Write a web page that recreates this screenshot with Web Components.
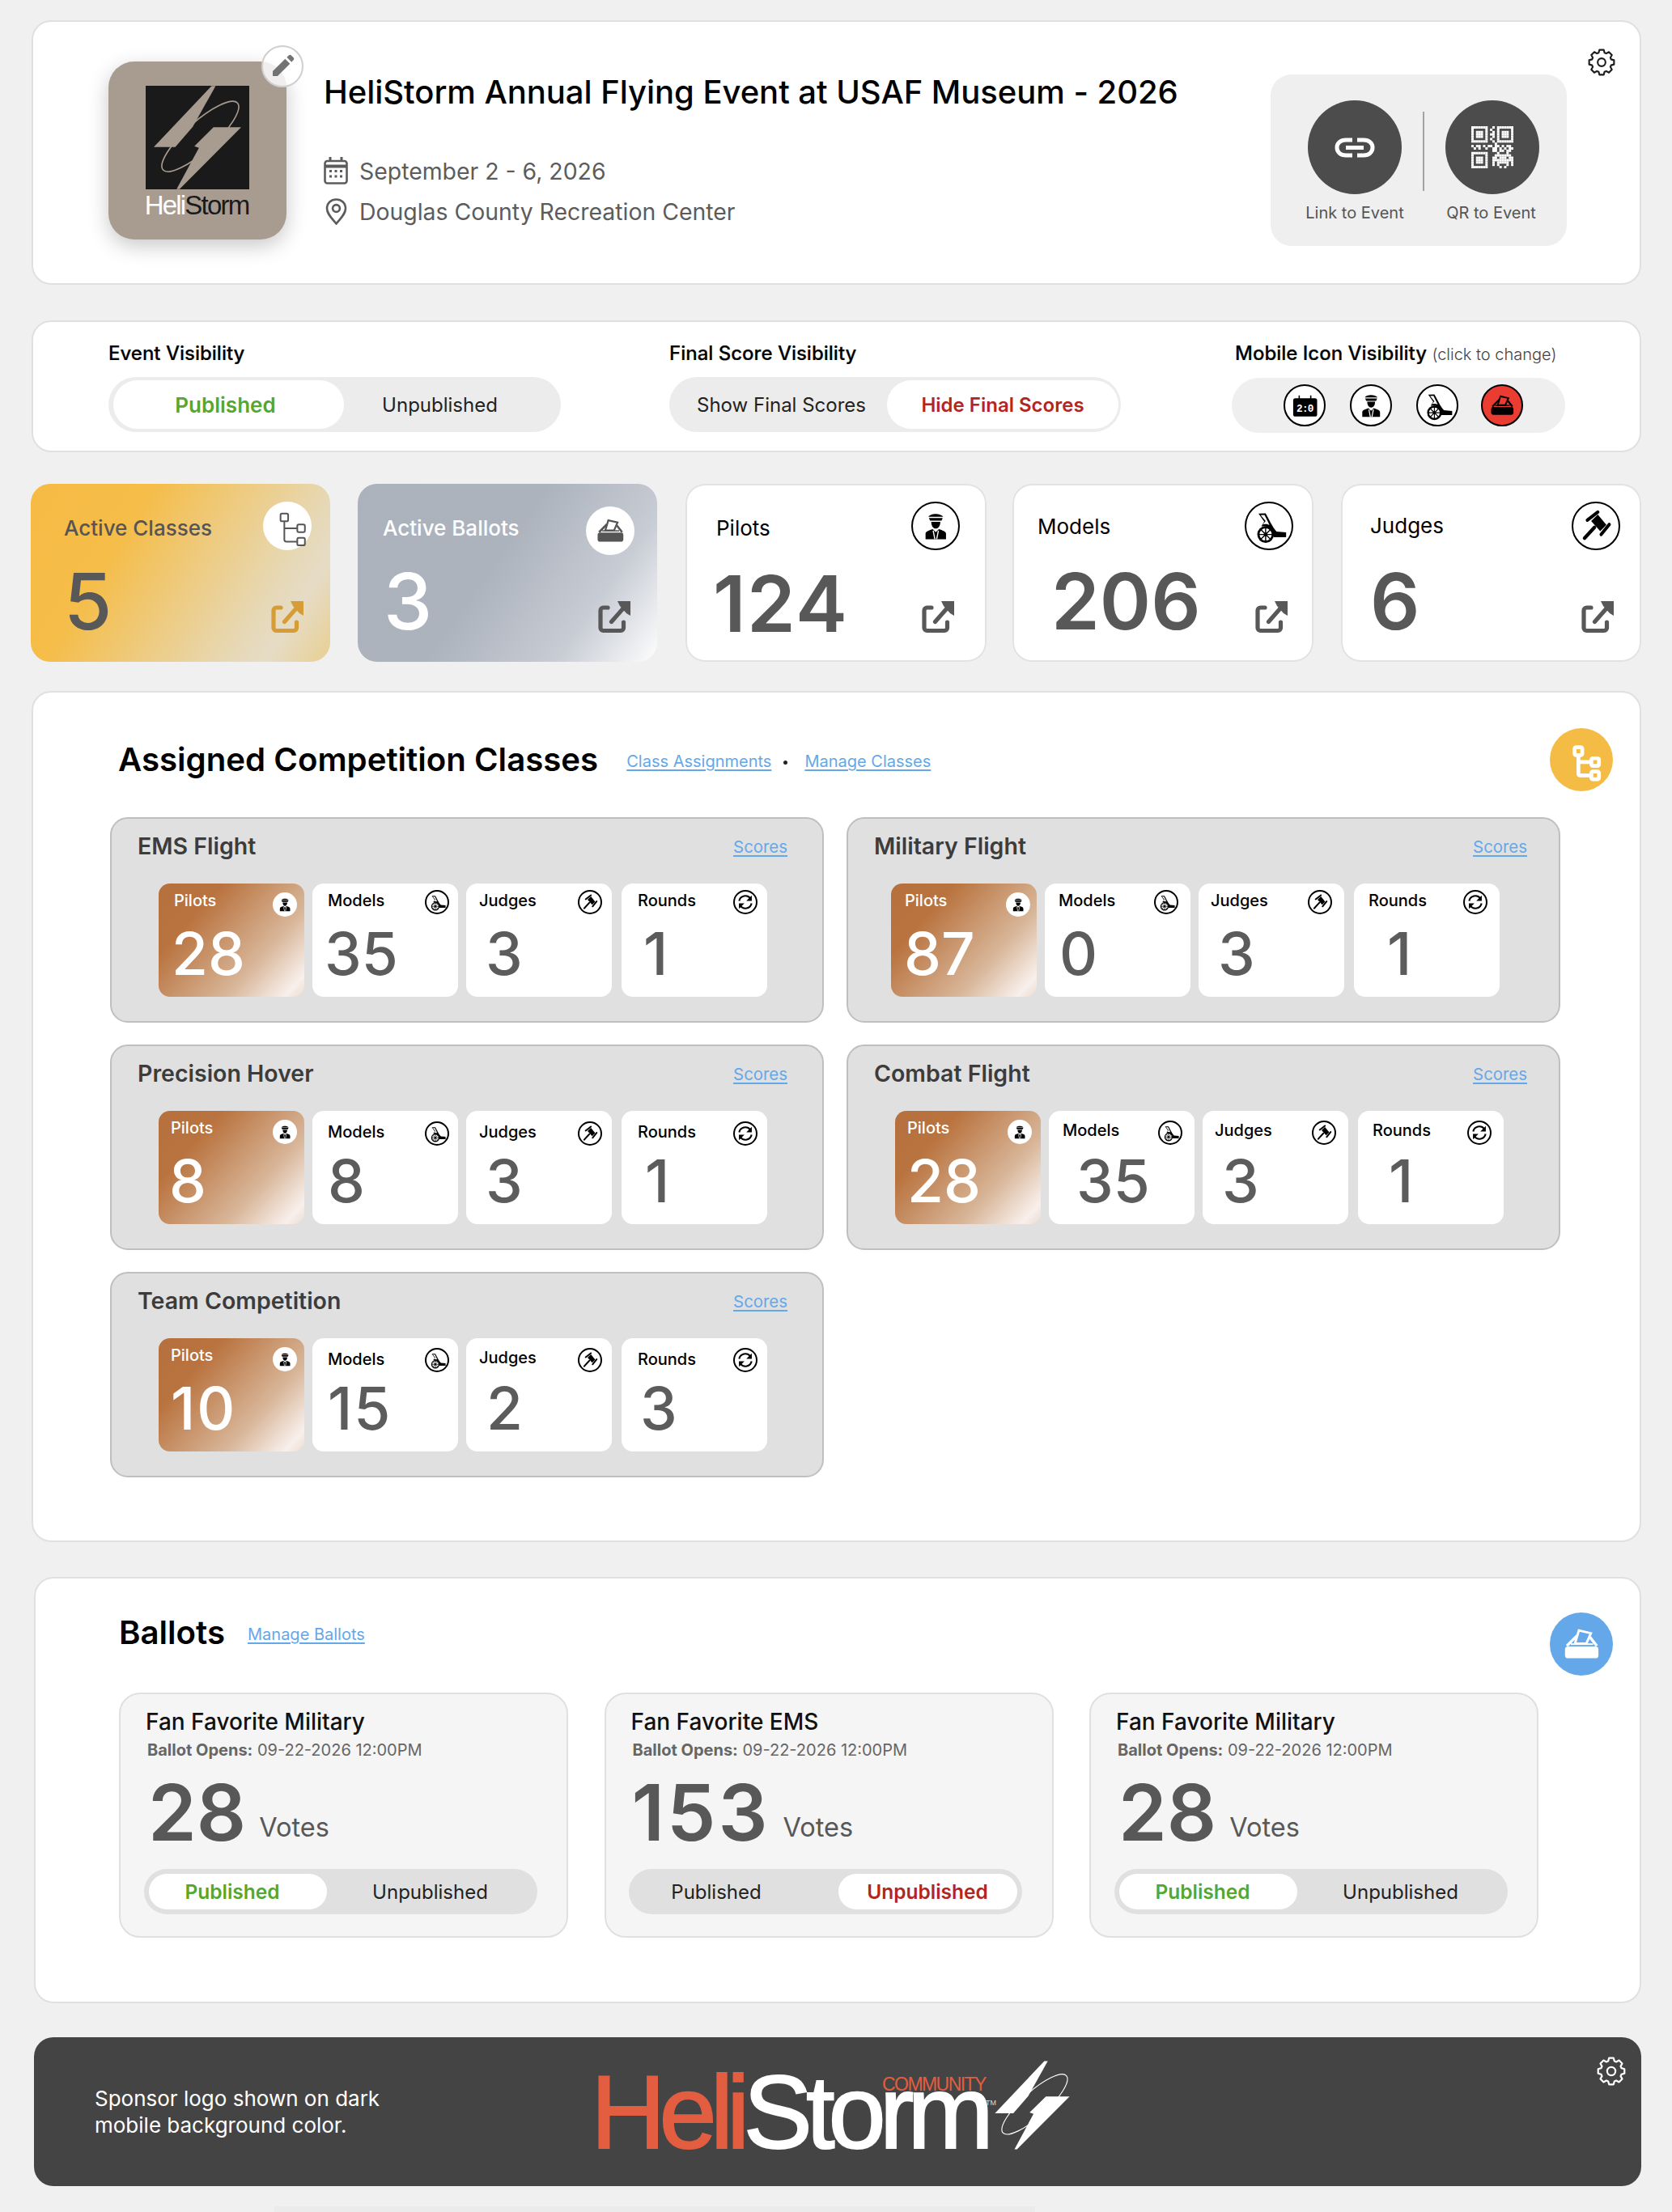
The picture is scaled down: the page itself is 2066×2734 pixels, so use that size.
<!DOCTYPE html>
<html lang="en">
<head>
<meta charset="utf-8">
<title>HeliStorm event</title>
<style>
  html, body { margin: 0; background: #f0f0f0; font-family: Inter, "Liberation Sans", sans-serif; }
  body { padding: 25px 38px 0 39px; width: 2066px; height: 2734px; box-sizing: border-box; overflow: hidden; }
  .stats { display: flex; margin: 39px 0 36px -1px; }
  .foot { width: 940px; height: 8px; margin: 25px 0 0 300px; background: #ebebeb; }
</style>
</head>
<body>
  <event-header></event-header>
  <visibility-card></visibility-card>
  <div class="stats">
    <stat-card tone="gold" label="Active Classes" value="5" icon="tree" style="--w:370px;--lx:41px;--nx:41px;--ex:33px;--bx:23px"></stat-card>
    <stat-card tone="steel" label="Active Ballots" value="3" icon="ballot" style="--w:370px;--gap:34px;--lx:31px;--nx:32px;--ex:33px;--bx:28px"></stat-card>
    <stat-card label="Pilots" value="124" icon="pilot" style="--w:372px;--gap:35px;--lx:38px;--nx:34px;--ex:40px;--bx:33px;--nls:1.5px;--ny:3px"></stat-card>
    <stat-card label="Models" value="206" icon="model" style="--w:372px;--gap:32px;--lx:31px;--nx:48px;--ex:32px;--bx:25px;--ly:-2px"></stat-card>
    <stat-card label="Judges" value="6" icon="gavel" style="--w:371px;--gap:34px;--lx:36px;--nx:36px;--ex:34px;--bx:26px;--ly:-3px"></stat-card>
  </div>

  <section-card heading="Assigned Competition Classes" icon="tree" tint="#f5bc45" class="classes">
    <a slot="links">Class Assignments</a><i slot="links"></i><a slot="links">Manage Classes</a>
    <class-card heading="EMS Flight" style="--tx:58px;--sr:43px;--ly:-1px;--bi:12px">
      <mini-stat label="Pilots" value="28" icon="pilot" hot style="--nx:16px;--lx:19px"></mini-stat>
      <mini-stat label="Models" value="35" icon="model" style="--nx:15px;--lx:19px;--bi:11px"></mini-stat>
      <mini-stat label="Judges" value="3" icon="gavel" style="--nx:24px;--lx:16px"></mini-stat>
      <mini-stat label="Rounds" value="1" icon="sync" last style="--nx:27px;--lx:20px"></mini-stat>
    </class-card>
    <class-card heading="Military Flight" style="--tx:53px;--sr:39px;--ly:-1px;--bi:15px">
      <mini-stat label="Pilots" value="87" icon="pilot" hot style="--nx:16px;--lx:17px;--hb:8px"></mini-stat>
      <mini-stat label="Models" value="0" icon="model" style="--nx:18px;--lx:17px"></mini-stat>
      <mini-stat label="Judges" value="3" icon="gavel" style="--nx:24px;--lx:15px"></mini-stat>
      <mini-stat label="Rounds" value="1" icon="sync" last style="--nx:41px;--lx:18px"></mini-stat>
    </class-card>
    <class-card heading="Precision Hover" style="--tx:58px;--sr:43px;--ly:4px;--by:5px;--bi:12px">
      <mini-stat label="Pilots" value="8" icon="pilot" hot style="--nx:13px;--lx:15px;--ly:-1px"></mini-stat>
      <mini-stat label="Models" value="8" icon="model" style="--nx:19px;--lx:19px;--bi:11px"></mini-stat>
      <mini-stat label="Judges" value="3" icon="gavel" style="--nx:24px;--lx:16px"></mini-stat>
      <mini-stat label="Rounds" value="1" icon="sync" last style="--nx:29px;--lx:20px"></mini-stat>
    </class-card>
    <class-card heading="Combat Flight" style="--tx:58px;--sr:39px;--ly:2px;--by:4px;--bi:15px">
      <mini-stat label="Pilots" value="28" icon="pilot" hot style="--nx:15px;--lx:15px;--ly:-1px;--hb:11px"></mini-stat>
      <mini-stat label="Models" value="35" icon="model" style="--nx:34px;--lx:17px"></mini-stat>
      <mini-stat label="Judges" value="3" icon="gavel" style="--nx:24px;--lx:15px"></mini-stat>
      <mini-stat label="Rounds" value="1" icon="sync" last style="--nx:38px;--lx:18px"></mini-stat>
    </class-card>
    <class-card heading="Team Competition" style="--tx:58px;--sr:43px;--ly:4px;--by:4px;--bi:12px">
      <mini-stat label="Pilots" value="10" icon="pilot" hot style="--nx:15px;--lx:15px;--ly:-1px;--nls:2px"></mini-stat>
      <mini-stat label="Models" value="15" icon="model" style="--nx:19px;--lx:19px;--bi:11px;--nls:2px"></mini-stat>
      <mini-stat label="Judges" value="2" icon="gavel" style="--nx:25px;--lx:16px;--ly:2px"></mini-stat>
      <mini-stat label="Rounds" value="3" icon="sync" last style="--nx:23px;--lx:20px"></mini-stat>
    </class-card>
  </section-card>

  <section-card heading="Ballots" icon="ballot" tint="#64a8ea" class="ballots">
    <a slot="links">Manage Ballots</a>
    <ballot-card heading="Fan Favorite Military" value="28" active="a"></ballot-card>
    <ballot-card heading="Fan Favorite EMS" value="153" active="b"></ballot-card>
    <ballot-card heading="Fan Favorite Military" value="28" active="a"></ballot-card>
  </section-card>

  <sponsor-card></sponsor-card>
  <div class="foot"></div>

<script>
  // gear path, 8 teeth, drawn in a 24 box
  function gearPath() {
    let d = '';
    for (let i = 0; i < 8; i++) {
      const a = i * Math.PI / 4;
      const pts = [[8.7, -0.30], [11, -0.17], [11, 0.17], [8.7, 0.30]];
      pts.forEach(p => {
        const x = 12 + p[0] * Math.sin(a + p[1]);
        const y = 12 - p[0] * Math.cos(a + p[1]);
        d += (d ? 'L' : 'M') + x.toFixed(2) + ' ' + y.toFixed(2);
      });
    }
    return d + 'Z';
  }

  // little qr with the invader in the corner
  function qrRects() {
    const rows = [
      '111111100101111111',
      '100000101001000001',
      '101110100101011101',
      '101110101101011101',
      '101110100101011101',
      '100000101001000001',
      '111111100101111111',
      '000000000010000000',
      '101101011011010110',
      '010100100110101011',
      '000000000110110110',
      '111111100001000100',
      '100000100011111110',
      '101110100110111011',
      '101110100111111111',
      '101110100101111101',
      '100000100101000101',
      '111111100000101000'
    ];
    let out = '';
    rows.forEach((r, y) => { [...r].forEach((c, x) => { if (c === '1') out += `<rect x="${x}" y="${y}" width="1.03" height="1.03"/>`; }); });
    return out;
  }

  const BOLT = `<path fill="currentColor" d="M425 138H440L355 290L290 365H210Z"/>
    <path fill="currentColor" d="M432 292H535L306 522H295L378 368L361 362Z"/>
    <ellipse cx="383" cy="326" rx="186" ry="54" transform="rotate(-42 383 326)" fill="none" stroke="currentColor" stroke-width="var(--ring,6)"/>`;

  const ICONS = {
    // drawn on the 51 box of the round badges
    pilot: `<path d="M18 16C20 12 31 12 33.5 16Z"/><path d="M18.5 17.2H33L31.8 20H19.8Z"/><path d="M21 21.2H30.5C30.5 25.5 28.5 28.3 25.7 28.3S21 25.5 21 21.2Z"/><path d="M15 39.5V33.8C15 31.3 19 30.2 22.5 29L25.7 32L29 29C32.5 30.2 36.5 31.3 36.5 33.8V39.5Z"/><path d="M23 30.5L24.8 39.5M28.5 30.5L26.7 39.5" stroke="var(--hole,#fff)" stroke-width="1.2" fill="none"/>`,
    model: `<path d="M14.5 12.5L22 12.3C25.5 18 28.5 26 33.5 31.5L43.5 32.3V37.3H30.5L29.5 31C27 28 25 26.5 22 26L17.5 26L20.5 21Z"/><path d="M16.8 14.2L20.8 14L26 24.5C24.5 24 23.5 23.6 21.5 23.6L19 24L22 20.5Z" fill="var(--hole,#fff)"/><circle cx="22" cy="34.5" r="7.6" fill="var(--hole,#fff)" stroke="currentColor" stroke-width="2.4"/><path d="M22 27V42M14.5 34.5H29.5M16.7 29.2L27.3 39.8M27.3 29.2L16.7 39.8" stroke="currentColor" stroke-width="1.2"/><circle cx="22" cy="34.5" r="2"/>`,
    gavel: `<path d="M20.5 20.5L27.5 13.5L36.5 24.5L30 31Z"/><path d="M16.5 19.5L27.5 11M31 34.5L39.5 24" fill="none" stroke="currentColor" stroke-width="3.4" stroke-linecap="round"/><path d="M24 27L13.5 38.5" fill="none" stroke="currentColor" stroke-width="3.6" stroke-linecap="round"/>`,
    sync: `<path d="M12.5 23A13.3 13.3 0 0 1 36 17.5" fill="none" stroke="currentColor" stroke-width="3.6"/><path d="M39 11.5V23H27.5Z"/><path d="M38.5 28A13.3 13.3 0 0 1 15 33.5" fill="none" stroke="currentColor" stroke-width="3.6"/><path d="M12 39.5V28H23.5Z"/>`,
    score: `<path d="M19 13.5V18M33 13.5V18" stroke="currentColor" stroke-width="1.5"/><rect x="11.7" y="17" width="29" height="22" rx="2.5"/><text x="26.2" y="33" text-anchor="middle" font-family="Liberation Mono,monospace" font-weight="700" font-size="12.5" fill="#fff" textLength="21">2:0</text>`,
    ballot: `<rect x="12.3" y="27.5" width="27" height="9.5" rx="2.4"/><path d="M13.8 27L22 18.7M38 27L32.5 20" fill="none" stroke="currentColor" stroke-width="2.2"/><path d="M23.5 14.5L33.2 16.8L29.5 25.2H20.3Z" fill="none" stroke="currentColor" stroke-width="1.9"/><path d="M17 25.6H35" stroke="currentColor" stroke-width="1.3"/>`,
    tree: `<g fill="none" stroke="currentColor" stroke-width="var(--sw,1.7)"><rect x="18.4" y="12.5" width="8" height="8.2" rx="1.6"/><rect x="36" y="24" width="8" height="8" rx="1.6"/><rect x="36" y="38" width="8" height="8" rx="1.6"/><path d="M22.4 20.7V40C22.4 41.5 23.4 42 24.5 42H36M22.4 28H36"/></g>`,
    // other boxes
    ext: `<g fill="none" stroke="currentColor" stroke-width="5.2" stroke-linecap="round"><path d="M12 8H6.5C4.5 8 3 9.5 3 11.5V33C3 35 4.5 36.5 6.5 36.5H28C30 36.5 31.5 35 31.5 33V26"/><path d="M16.5 25.5L31 9"/></g><path fill="currentColor" d="M24 0H40V18L35 15L27 6Z"/>`,
    pencil: `<path d="M3 21V16.5L14.5 5L19 9.5L7.5 21Z"/><path d="M16 3.5L18 1.7C18.6 1.1 19.4 1.1 20 1.7L22.3 4C22.9 4.6 22.9 5.4 22.3 6L20.5 8Z"/>`,
    gear: `<path d="${gearPath()}" fill="none" stroke="currentColor" stroke-width="1.5" stroke-linejoin="round"/><circle cx="12" cy="12" r="3.4" fill="none" stroke="currentColor" stroke-width="1.5"/>`,
    link: `<g fill="none" stroke="#fff" stroke-width="5"><path d="M22 3H14C7.5 3 3 7 3 12.5S7.5 22 14 22H22"/><path d="M28 3H36C42.5 3 47 7 47 12.5S42.5 22 36 22H28"/><path d="M14 12.5H36"/></g>`,
    qr: `<g fill="#fff">${qrRects()}</g>`,
    calendar: `<g fill="none" stroke="currentColor" stroke-width="2.6"><rect x="1.5" y="5" width="27" height="27.5" rx="3"/><path d="M2 11.5H28" stroke-width="4"/><path d="M8 0V6M22 0V6" stroke-width="3"/></g><g fill="currentColor"><rect x="7" y="16" width="3" height="3"/><rect x="13.5" y="16" width="3" height="3"/><rect x="20" y="16" width="3" height="3"/><rect x="7" y="22.5" width="3" height="3"/><rect x="13.5" y="22.5" width="3" height="3"/><rect x="20" y="22.5" width="3" height="3"/></g>`,
    pin: `<path d="M13.5 31.5C8 24.5 2 19.5 2 12.5C2 6 7 1.5 13.5 1.5S25 6 25 12.5C25 19.5 19 24.5 13.5 31.5Z" fill="none" stroke="currentColor" stroke-width="2.6"/><circle cx="13.5" cy="12.5" r="4.4" fill="none" stroke="currentColor" stroke-width="2.6"/>`
  };
  const BOXES = { ext: '0 0 40 40', pencil: '0 0 24 24', gear: '0 0 24 24', link: '0 0 50 25', qr: '0 0 18 18', calendar: '0 0 30 34', pin: '0 0 27 33' };

  class HsIcon extends HTMLElement {
    connectedCallback() {
      const n = this.getAttribute('name');
      const w = this.getAttribute('w') || 24, h = this.getAttribute('h') || w;
      this.attachShadow({ mode: 'open' }).innerHTML = `
        <style>:host{display:inline-flex;flex:none;line-height:0} svg{display:block}</style>
        <svg width="${w}" height="${h}" viewBox="${BOXES[n] || '0 0 51 51'}" fill="currentColor">${ICONS[n]}</svg>`;
    }
  }
  customElements.define('hs-icon', HsIcon);

  // round badge: outline by default, variants through attributes
  class HsBadge extends HTMLElement {
    connectedCallback() {
      const s = this.getAttribute('size') || 60;
      this.attachShadow({ mode: 'open' }).innerHTML = `
        <style>
          :host{display:inline-flex;flex:none;width:${s}px;height:${s}px;border-radius:50%;box-sizing:border-box;border:2px solid #000;background:#fff;color:#000;align-items:center;justify-content:center}
          :host([plain]){border:0}
          :host([red]){background:#ea3c30;--hole:#ea3c30}
        </style>
        <hs-icon name="${this.getAttribute('icon')}" w="${s}"></hs-icon>`;
    }
  }
  customElements.define('hs-badge', HsBadge);

  class SegToggle extends HTMLElement {
    constructor() {
      super();
      this.attachShadow({ mode: 'open' }).innerHTML = `
        <style>
          :host{display:flex;box-sizing:border-box;height:var(--h,68px);width:var(--w,559px);padding:var(--py,4px) var(--pr,6px) var(--py,4px) var(--pl,6px);border-radius:40px;background:var(--bg,#ececec);font-size:var(--fs,24px);color:#222;align-items:stretch}
          span{display:flex;align-items:center;justify-content:center;white-space:nowrap}
          .on{width:var(--tw,285px);flex:none;box-sizing:border-box;padding-right:var(--opr,0);background:#fff;border-radius:30px;font-weight:600;color:var(--on,#53a82f);font-size:var(--fs-on,var(--fs,24px))}
          .off{flex:1;padding:0 var(--ipr,0) 0 var(--ipl,0)}
        </style>
        <span id="a"><slot name="a"></slot></span><span id="b"><slot name="b"></slot></span>`;
    }
    connectedCallback() {
      const act = this.getAttribute('active') || 'a';
      this.shadowRoot.getElementById('a').className = act === 'a' ? 'on' : 'off';
      this.shadowRoot.getElementById('b').className = act === 'b' ? 'on' : 'off';
    }
  }
  customElements.define('seg-toggle', SegToggle);

  class EventHeader extends HTMLElement {
    constructor() {
      super();
      this.attachShadow({ mode: 'open' }).innerHTML = `
        <style>
          :host{display:flex;box-sizing:border-box;height:327px;background:#fff;border:2px solid #e0e0e0;border-radius:24px;padding:49px 30px 0 93px}
          .avatar{position:relative;flex:none;width:220px;height:220px;border-radius:32px;background:#a89c90;box-shadow:0 8px 26px rgba(0,0,0,.22);display:flex;flex-direction:column;align-items:center}
          .sq{width:128px;height:128px;margin-top:30px;background:#1a1a1a;color:#a89c90;--ring:5px}
          .sq svg{display:block}
          .mark{font:400 33px/36px "Liberation Sans",sans-serif;letter-spacing:-1.8px;color:#1a1a1a;margin-top:2px;padding-right:2px}
          .mark b{font-weight:400;color:#fff}
          .edit{position:absolute;left:189px;top:-20px;width:52px;height:52px;box-sizing:border-box;border-radius:50%;border:2px solid #cfcfcf;background:rgba(255,255,255,.84);color:#737373;display:flex;align-items:center;justify-content:center}
          .info{flex:1;margin:14px 0 0 46px}
          h1{margin:0;font-size:40px;line-height:48px;font-weight:500;color:#000;white-space:nowrap;letter-spacing:-.04px}
          .row{display:flex;align-items:center;height:34px;font-size:28.4px;color:#5c5c5c;white-space:nowrap}
          .row hs-icon{width:30px;margin-right:14px;justify-content:center}
          .row.d{margin-top:56px}.row.l{margin-top:16px}
          .panel{flex:none;width:366px;height:212px;margin-top:16px;background:#efefef;border-radius:26px;display:grid;grid-template-columns:116px 2px 116px;column-gap:26px;padding:32px 0 0 46px;box-sizing:border-box}
          .btn{display:flex;flex-direction:column;align-items:center}
          .btn.q{padding-right:3px}
          .circ{width:116px;height:116px;border-radius:50%;background:#4c4c4c;display:flex;align-items:center;justify-content:center;flex:none}
          .q .circ{margin-right:-3px}
          .lbl{font-size:20px;line-height:24px;margin-top:11px;color:#555;white-space:nowrap}
          .sep{width:2px;height:98px;margin-top:14px;background:#a3a3a3}
          .gear{flex:none;margin:-16px 0 0 26px;color:#1c1c1c;align-self:flex-start}
        </style>
        <div class="avatar">
          <div class="sq"><svg width="128" height="128" viewBox="180 138 385 384">${BOLT}</svg></div>
          <div class="mark"><b>Heli</b>Storm</div>
          <div class="edit"><hs-icon name="pencil" w="32"></hs-icon></div>
        </div>
        <div class="info">
          <h1>HeliStorm Annual Flying Event at USAF Museum - 2026</h1>
          <div class="row d"><hs-icon name="calendar" w="30" h="34"></hs-icon>September 2 - 6, 2026</div>
          <div class="row l"><hs-icon name="pin" w="27" h="33"></hs-icon>Douglas County Recreation Center</div>
        </div>
        <div class="panel">
          <div class="btn"><div class="circ"><hs-icon name="link" w="50" h="25"></hs-icon></div><div class="lbl">Link to Event</div></div>
          <div class="sep"></div>
          <div class="btn q"><div class="circ"><hs-icon name="qr" w="52" h="52"></hs-icon></div><div class="lbl">QR to Event</div></div>
        </div>
        <hs-icon class="gear" name="gear" w="34"></hs-icon>`;
    }
  }
  customElements.define('event-header', EventHeader);

  class VisibilityCard extends HTMLElement {
    constructor() {
      super();
      this.attachShadow({ mode: 'open' }).innerHTML = `
        <style>
          :host{display:flex;box-sizing:border-box;height:163px;margin-top:44px;background:#fff;border:2px solid #e0e0e0;border-radius:24px;padding:24px 0 0 93px;column-gap:134px}
          .lb{font-size:24px;line-height:30px;font-weight:500;color:#000;margin-bottom:14px;white-space:nowrap;-webkit-text-stroke:.2px #000}
          .lb small{font-size:20px;font-weight:300;color:#444;-webkit-text-stroke:0}
          .m .lb{margin-left:4px}
          .icons{display:flex;width:412px;height:68px;border-radius:40px;background:#efefef;align-items:center;padding-left:64px;box-sizing:border-box}
          .icons hs-badge{margin-right:30px}
          .icons hs-badge:nth-child(3){margin-right:28px}
        </style>
        <div>
          <div class="lb">Event Visibility</div>
          <seg-toggle active="a" style="--ipr:25px;--fs-on:26px;--opr:8px"><span slot="a">Published</span><span slot="b">Unpublished</span></seg-toggle>
        </div>
        <div>
          <div class="lb">Final Score Visibility</div>
          <seg-toggle active="b" style="--w:558px;--tw:286px;--pr:3px;--pl:0px;--ipl:8px;--on:#b3261e"><span slot="a">Show Final Scores</span><span slot="b">Hide Final Scores</span></seg-toggle>
        </div>
        <div class="m" style="margin-left:3px">
          <div class="lb">Mobile Icon Visibility <small>(click to change)</small></div>
          <div class="icons">
            <hs-badge icon="score" size="52"></hs-badge>
            <hs-badge icon="pilot" size="52"></hs-badge>
            <hs-badge icon="model" size="52"></hs-badge>
            <hs-badge icon="ballot" size="52" red></hs-badge>
          </div>
        </div>`;
    }
  }
  customElements.define('visibility-card', VisibilityCard);

  class StatCard extends HTMLElement {
    connectedCallback() {
      const a = n => this.getAttribute(n);
      const plain = a('tone') ? 'plain' : '';
      this.attachShadow({ mode: 'open' }).innerHTML = `
        <style>
          :host{display:block;flex:none;box-sizing:border-box;width:var(--w);margin-left:var(--gap,0);height:220px;border-radius:24px;background:#fff;box-shadow:inset 0 0 0 2px #e2e2e2;color:#585858}
          :host([tone=gold]){background:linear-gradient(122deg,#f5bb44 0%,#f5bd49 30%,#e6d9b8 76%,#e6dcc6 84%,#e8cf92 100%);box-shadow:none}
          :host([tone=steel]){background:linear-gradient(125deg,#abb2bc 0%,#acb3bd 45%,#c8ccd4 76%,#f2f3f5 95%,#fff 100%);box-shadow:none;color:#fff}
          .top{display:flex;justify-content:space-between;height:82px;padding:22px var(--bx) 0 var(--lx);box-sizing:border-box}
          .lab{font-size:26px;line-height:66px;height:66px;color:#000;white-space:nowrap;margin-top:var(--ly,0)}
          :host([tone]) .lab{font-weight:500;color:#555}
          :host([tone=steel]) .lab{color:#fff}
          :host([tone=steel]) hs-badge{margin-top:6px}
          :host([tone=gold]) hs-badge,:host([tone=steel]) hs-badge{color:#555}
          .bot{display:flex;justify-content:space-between;padding:15px var(--ex) 0 var(--nx)}
          .num{font-size:96px;line-height:96px;font-weight:600;letter-spacing:var(--nls,0);margin-top:var(--ny,0)}
          :host([tone]) .num{font-weight:500}
          hs-icon.e{margin-top:48px;color:#585858}
          :host([tone=gold]) hs-icon.e{color:#d69c36}
        </style>
        <div class="top"><div class="lab">${a('label')}</div><hs-badge icon="${a('icon')}" ${plain}></hs-badge></div>
        <div class="bot"><div class="num">${a('value')}</div><hs-icon class="e" name="ext" w="40"></hs-icon></div>`;
    }
  }
  customElements.define('stat-card', StatCard);

  class SectionCard extends HTMLElement {
    connectedCallback() {
      const a = n => this.getAttribute(n);
      const iconW = a('icon') === 'tree' ? 60 : 78;
      this.attachShadow({ mode: 'open' }).innerHTML = `
        <style>
          :host{display:block;box-sizing:border-box;background:#fff;border:2px solid #e0e0e0;border-radius:24px}
          :host(.classes){height:1052px;padding:44px 33px 0 95px}
          :host(.ballots){height:527px;margin:43px 0 0 3px;padding:42px 33px 0 103px}
          .head{display:flex;align-items:center;height:78px}
          :host(.classes) .head{padding-left:10px;margin-bottom:32px}
          :host(.ballots) .head{margin-bottom:21px}
          :host(.ballots) h2,:host(.ballots) .links{margin-top:-28px}
          h2{margin:0;font-size:40.2px;line-height:48px;font-weight:600;color:#000;white-space:nowrap}
          .links{flex:1;display:flex;align-items:center;margin-left:35px;padding-top:4px;font-size:20px;color:#64a8ea}
          :host(.ballots) .links{margin-left:28px}
          .c{width:78px;height:78px;border-radius:50%;background:${a('tint')};color:#fff;--hole:${a('tint')};display:flex;align-items:center;justify-content:center;--sw:4px}
          ::slotted(a){text-decoration:underline;text-underline-offset:3px;cursor:pointer;white-space:nowrap}
          ::slotted(i){width:5px;height:5px;border-radius:50%;background:#222;margin:2px 21px 0 15px;flex:none}
          .grid{display:grid}
          :host(.classes) .grid{grid-template-columns:882px 882px;column-gap:28px;row-gap:27px}
          :host(.ballots) .grid{grid-template-columns:555px 555px 555px;column-gap:44.5px}
        </style>
        <div class="head"><h2>${a('heading')}</h2><div class="links"><slot name="links"></slot></div><div class="c"><hs-icon name="${a('icon')}" w="${iconW}"></hs-icon></div></div>
        <div class="grid"><slot></slot></div>`;
    }
  }
  customElements.define('section-card', SectionCard);

  class ClassCard extends HTMLElement {
    connectedCallback() {
      this.attachShadow({ mode: 'open' }).innerHTML = `
        <style>
          :host{display:block;box-sizing:border-box;height:254px;background:#e0e0e0;border:2px solid #bfbfbf;border-radius:22px;padding:0 var(--sr) 0 32px}
          .h{display:flex;justify-content:space-between;align-items:center;height:68px;box-sizing:border-box}
          .t{font-size:28.5px;font-weight:600;color:#3c3c3c;margin-top:-2px}
          .s{font-size:20.4px;color:#64a8ea;text-decoration:underline;text-underline-offset:3px}
          .tiles{display:flex;gap:10px;margin:12px 0 0 calc(var(--tx) - 32px)}
        </style>
        <div class="h"><div class="t">${this.getAttribute('heading')}</div><div class="s">Scores</div></div>
        <div class="tiles"><slot></slot></div>`;
    }
  }
  customElements.define('class-card', ClassCard);

  class MiniStat extends HTMLElement {
    connectedCallback() {
      const a = n => this.getAttribute(n);
      this.attachShadow({ mode: 'open' }).innerHTML = `
        <style>
          :host{display:block;flex:none;box-sizing:border-box;width:180px;height:140px;border-radius:14px;background:#fff;color:#5c5c5c}
          :host([hot]){background:linear-gradient(132deg,#b5703e 0%,#b9733f 26%,#d8b699 68%,#f8f0ec 92%,#ecdccf 100%);color:#fff}
          :host([last]){margin-left:2px}
          .top{display:flex;justify-content:space-between;height:38px;padding:8px var(--bi,11px) 0 var(--lx);box-sizing:border-box}
          :host([hot]) .top{padding-right:var(--hb,9px)}
          .lab{font-size:20px;line-height:26px;font-weight:500;color:#000;margin-top:calc(1px + var(--ly,0px))}
          :host([hot]) .lab{color:#fff}
          hs-badge{margin-top:var(--by,0)}
          :host([hot]) hs-badge{margin-top:3px}
          .num{font-size:73px;line-height:72px;font-weight:500;letter-spacing:var(--nls,0);margin:13px 0 0 var(--nx)}
        </style>
        <div class="top"><div class="lab">${a('label')}</div><hs-badge icon="${a('icon')}" size="30" ${this.hasAttribute('hot') ? 'plain' : ''}></hs-badge></div>
        <div class="num">${a('value')}</div>`;
    }
  }
  customElements.define('mini-stat', MiniStat);

  class BallotCard extends HTMLElement {
    connectedCallback() {
      const a = n => this.getAttribute(n);
      const ems = a('value') === '153';
      const st = ems ? '--ipr:42px;--on:#b3261e;--pl:0px;--tw:221px;--pr:6px' : '--ipl:1px;--opr:14px';
      this.attachShadow({ mode: 'open' }).innerHTML = `
        <style>
          :host{display:block;box-sizing:border-box;height:303px;background:#f5f5f5;border:2px solid #e0e0e0;border-radius:26px;padding:16px 0 0 31px}
          .t{font-size:28px;line-height:36px;font-weight:500;color:#111;white-space:nowrap}
          .o{font-size:20px;line-height:26px;color:#666;margin:4px 0 0 2px;white-space:nowrap}
          .o b{font-weight:700}
          .v{display:flex;align-items:baseline;margin:6px 0 0 ${ems ? 1 : 3}px;color:#585858}
          .n{font-size:96px;line-height:116px;font-weight:600;letter-spacing:${ems ? 3 : 0}px}
          .u{font-size:32.5px;margin-left:16px;transform:translateY(-5px)}
          seg-toggle{margin:12px 0 0 ${ems ? -3 : -2}px}
        </style>
        <div class="t">${a('heading')}</div>
        <div class="o"><b>Ballot Opens:</b> 09-22-2026 12:00PM</div>
        <div class="v"><span class="n">${a('value')}</span><span class="u">Votes</span></div>
        <seg-toggle active="${a('active')}" style="--w:486px;--h:56px;--py:6px;--tw:220px;--bg:#e0e0e0;--fs:24px;--fs-on:24.5px;${st}"><span slot="a">Published</span><span slot="b">Unpublished</span></seg-toggle>`;
    }
  }
  customElements.define('ballot-card', BallotCard);

  class SponsorCard extends HTMLElement {
    constructor() {
      super();
      this.attachShadow({ mode: 'open' }).innerHTML = `
        <style>
          :host{display:flex;box-sizing:border-box;height:184px;margin:42px 0 0 3px;background:#444;border-radius:24px;padding-left:75px;color:#fff}
          .txt{width:622px;flex:none;font-size:26px;line-height:33px;align-self:center;margin-top:-1px}
          .logo{position:relative;flex:none;width:584px;height:184px;display:flex;align-items:flex-start;color:#fff}
          .word{position:absolute;left:-9px;top:19px;font:400 128px/148px "Liberation Sans",sans-serif;letter-spacing:-8px;white-space:nowrap;-webkit-text-stroke:2px currentColor}
          .word b{font-weight:400;color:#e35d40}
          .com{position:absolute;left:351px;top:44px;font:400 23px/28px "Liberation Sans",sans-serif;letter-spacing:-1.55px;color:#e35d40}
          .tm{position:absolute;left:479px;top:76px;font:400 9px/10px "Liberation Sans",sans-serif;color:#ddd}
          .logo svg{position:absolute;left:489px;top:26px;--ring:4px}
          .gear{margin:24px 19px 0 auto;color:#fff}
        </style>
        <div class="txt">Sponsor logo shown on dark<br>mobile background color.</div>
        <div class="logo">
          <div class="word"><b>Heli</b>Storm</div>
          <div class="com">COMMUNITY</div>
          <div class="tm">TM</div>
          <svg width="95" height="116" viewBox="205 136 335 388">${BOLT}</svg>
        </div>
        <hs-icon class="gear" name="gear" w="36"></hs-icon>`;
    }
  }
  customElements.define('sponsor-card', SponsorCard);
</script>
</body>
</html>
